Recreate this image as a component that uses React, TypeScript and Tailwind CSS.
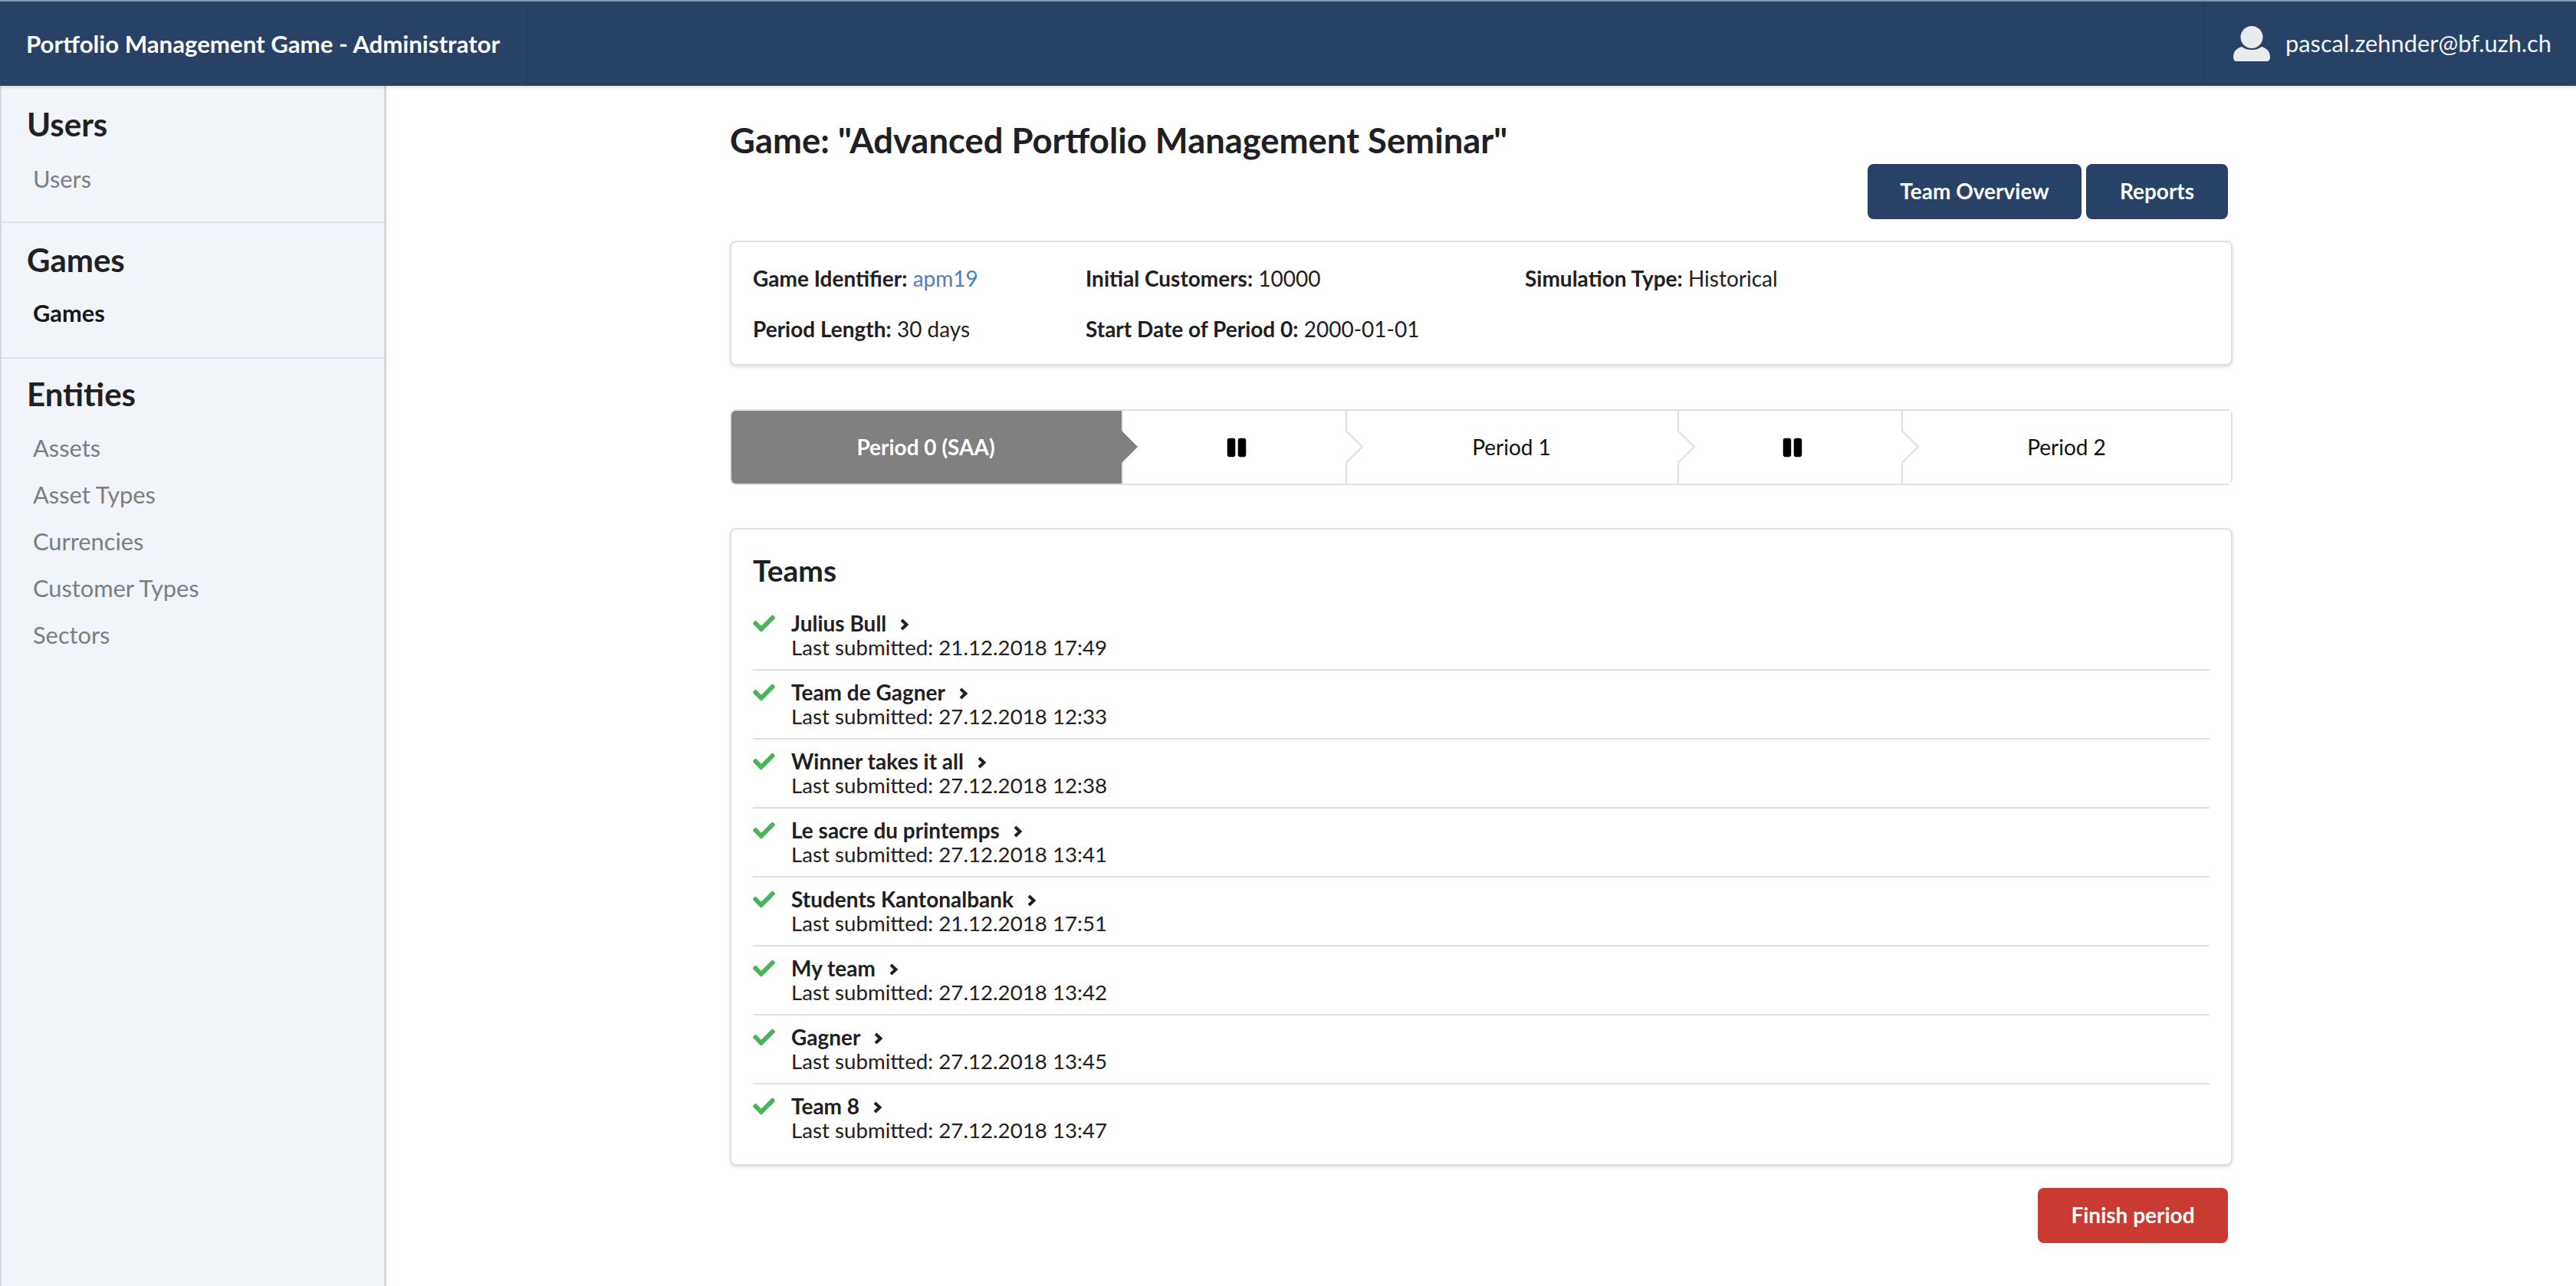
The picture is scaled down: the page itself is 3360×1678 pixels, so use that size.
import React from "react";
import { FaCheck, FaPause } from "react-icons/fa";

const teams = [
  ["Julius Bull", "21.12.2018 17:49"],
  ["Team de Gagner", "27.12.2018 12:33"],
  ["Winner takes it all", "27.12.2018 12:38"],
  ["Le sacre du printemps", "27.12.2018 13:41"],
  ["Students Kantonalbank", "21.12.2018 17:51"],
  ["My team", "27.12.2018 13:42"],
  ["Gagner", "27.12.2018 13:45"],
  ["Team 8", "27.12.2018 13:47"],
];

function SideSection({ title, items, active, cls, gap }: { title: string; items: string[]; active?: boolean; cls: string; gap: string }) {
  return (
    <div className={cls}>
      <div className={"pl-[33px] text-[42px] leading-[46px] font-bold text-[#1f2124] " + gap}>{title}</div>
      {items.map((i) => (
        <div key={i} className={"pl-[41px] h-[61px] flex items-center text-[30.8px] " + (active ? "font-bold text-[#14161a]" : "text-[#7b7e83]")}>
          {i}
        </div>
      ))}
    </div>
  );
}

function Arrow({ fill }: { fill?: boolean }) {
  return fill ? (
    <svg className="absolute left-0 top-[26px]" width="22" height="42" viewBox="0 0 22 42">
      <polygon points="0,0 21,21 0,42" fill="#808080" />
    </svg>
  ) : (
    <svg className="absolute left-[-2px] top-[26px]" width="25" height="42" viewBox="0 0 25 42">
      <polygon points="0,0 22,21 0,42" fill="#ffffff" />
      <polyline points="0.5,0 22,21 0.5,42" fill="none" stroke="#e0e0e0" strokeWidth="2" />
    </svg>
  );
}

function Step({ w, children, active, arrow }: { w: string; children: React.ReactNode; active?: boolean; arrow?: boolean }) {
  return (
    <div className={w + " relative flex items-center justify-center pb-[2px] text-[28px] " + (active ? "bg-[#808080] text-white font-bold rounded-l-[6px]" : "bg-white text-[#111] border-l-2 border-[#e0e0e0]")}>
      {children}
      {arrow && !active && <Arrow />}
    </div>
  );
}

function Label({ k, v, link }: { k: string; v: string; link?: boolean }) {
  return (
    <span>
      <b className="font-bold">{k}:</b> <span className={link ? "text-[#4a7fc4]" : ""}>{v}</span>
    </span>
  );
}

function Btn({ w, children, red }: { w: string; children: React.ReactNode; red?: boolean }) {
  return (
    <div className={w + " h-[72px] flex items-center justify-center pb-[2px] rounded-[8px] text-white text-[28px] font-bold " + (red ? "bg-[#c93a33]" : "bg-[#284166]")}>
      {children}
    </div>
  );
}

function Pause() {
  return <FaPause className="w-[28px] h-[28px] ml-[5px] mt-[2px] text-black" />;
}

export default function App() {
  return (
    <div className="h-[1678px] flex flex-col overflow-hidden bg-white text-[#1e2023] font-['Lato',sans-serif]">
      <header className="h-[112px] shrink-0 flex items-center bg-[#284166] border-t-2 border-[#8a99ad] text-white relative z-10 shadow-[0_2px_4px_rgba(0,0,0,0.12)]">
        <div className="w-[688px] h-full flex items-center pl-[34px] text-[31.2px] font-bold border-r border-[#233a5c]">Portfolio Management Game - Administrator</div>
        <div className="ml-auto w-[485px] h-full flex items-center border-l border-[#233a5c] pl-[37px]">
          <svg width="48" height="46" viewBox="0 0 48 46" className="shrink-0">
            <circle cx="24" cy="14.5" r="14.5" fill="#e9ebef" />
            <path d="M0 41c0-9 5-12 11-14 5 3 8 4 13 4s8-1 13-4c6 2 11 5 11 14 0 3-2 5-4 5H4c-2 0-4-2-4-5z" fill="#e9ebef" />
          </svg>
          <span className="ml-[20px] text-[30.8px] text-[#f2f4f7]">pascal.zehnder@bf.uzh.ch</span>
        </div>
      </header>
      <div className="flex-1 flex min-h-0">
        <aside className="w-[504px] shrink-0 bg-[#f1f4f9] border-l-2 border-r-[3px] border-[#d3d7df]">
          <SideSection title="Users" items={["Users"]} gap="mb-[19px]" cls="h-[179px] pt-[27px] border-b-2 border-[#dcdfe6]" />
          <SideSection title="Games" items={["Games"]} active gap="mb-[17px]" cls="h-[177px] pt-[25px] border-b-2 border-[#dcdfe6]" />
          <SideSection title="Entities" items={["Assets", "Asset Types", "Currencies", "Customer Types", "Sectors"]} gap="mb-[18px]" cls="pt-[23px]" />
        </aside>
        <main className="flex-1 min-w-0">
          <div className="w-[1960px] mx-auto pt-[42px]">
            <h1 className="text-[45.4px] leading-[58px] font-bold text-[#1e2023]">Game: "Advanced Portfolio Management Seminar"</h1>
            <div className="flex justify-end gap-[6px] pr-[6px] mt-[2px]">
              <Btn w="w-[279px]">Team Overview</Btn>
              <Btn w="w-[185px]">Reports</Btn>
            </div>
            <div className="mt-[28px] h-[163px] rounded-[8px] border-2 border-[#e0e0e0] shadow-[0_2px_4px_rgba(0,0,0,0.12)] pl-[28px] pt-[2px] flex flex-col justify-center gap-[33px] text-[28px] leading-[33px]">
              <div className="flex">
                <div className="w-[434px]"><Label k="Game Identifier" v="apm19" link /></div>
                <div className="w-[573px]"><Label k="Initial Customers" v="10000" /></div>
                <div><Label k="Simulation Type" v="Historical" /></div>
              </div>
              <div className="flex">
                <div className="w-[434px]"><Label k="Period Length" v="30 days" /></div>
                <div><Label k="Start Date of Period 0" v="2000-01-01" /></div>
              </div>
            </div>
            <div className="mt-[57px] h-[99px] flex rounded-[8px] border-2 border-[#e0e0e0]">
              <Step w="w-[509px] pr-[2px]" active>
                Period 0 (SAA)
              </Step>
              <div className="relative w-0 z-10"><Arrow fill /></div>
              <Step w="w-[292px]"><Pause /></Step>
              <Step w="w-[433px] pr-[2px]" arrow>Period 1</Step>
              <Step w="w-[292px]" arrow><Pause /></Step>
              <Step w="flex-1 pr-[1px]" arrow>Period 2</Step>
            </div>
            <div className="mt-[56px] h-[832px] rounded-[8px] border-2 border-[#e0e0e0] shadow-[0_2px_4px_rgba(0,0,0,0.12)] px-[28px] pt-[30px]">
              <h2 className="text-[39px] leading-[46px] font-bold text-[#1e2023] mb-[18px]">Teams</h2>
              {teams.map(([name, date], i) => (
                <div key={name} className={"h-[90px] flex pt-[12px] " + (i < teams.length - 1 ? "border-b-2 border-[#e0e0e0]" : "")}>
                  <FaCheck className="w-[29px] h-[29px] mt-[2px] text-[#4bb35a] shrink-0" />
                  <div className="ml-[21px] text-[28px] leading-[33px]">
                    <div className="flex items-center font-bold">
                      {name}
                      <svg width="13" height="16" viewBox="0 0 13 16" className="ml-[17px] mt-[2px]">
                        <polyline points="3,2 9.5,8 3,14" fill="none" stroke="#1e2023" strokeWidth="4" />
                      </svg>
                    </div>
                    <div className="text-[27.7px] -mt-[2px]">Last submitted: {date}</div>
                  </div>
                </div>
              ))}
            </div>
            <div className="flex justify-end pr-[6px] mt-[29px]">
              <Btn w="w-[248px]" red>Finish period</Btn>
            </div>
          </div>
        </main>
      </div>
    </div>
  );
}
